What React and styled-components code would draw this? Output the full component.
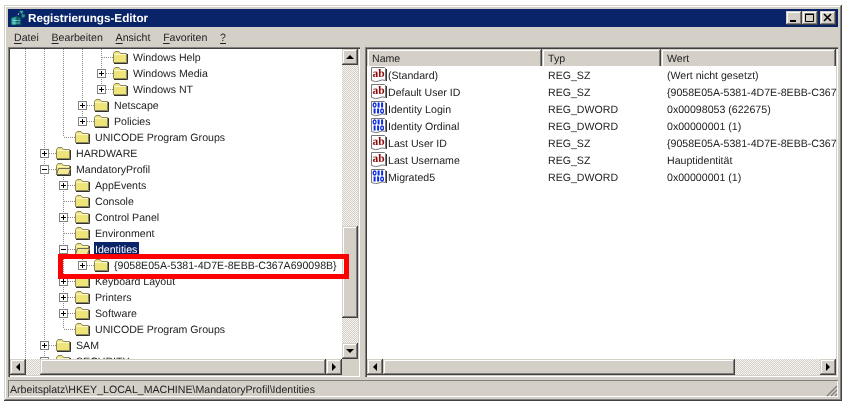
import React from 'react';
import styled, { createGlobalStyle, css } from 'styled-components';

const face = '#d4d0c8';

const GlobalStyle = createGlobalStyle`
  html, body {
    margin: 0;
    background: #fff;
  }
  body {
    padding: 5px 0 0 4px;
    font-family: "Liberation Sans", Tahoma, sans-serif;
    font-size: 10.6px;
    text-rendering: geometricPrecision;
    color: #222;
  }
`;

const raised = css`
  background-color: ${face};
  box-shadow: inset -1px -1px #404040, inset 1px 1px ${face}, inset -2px -2px #808080, inset 2px 2px #fff;
`;

const sunken = css`
  box-shadow: inset 1px 1px #808080, inset 2px 2px #404040, inset -1px -1px #fff, inset -2px -2px ${face};
`;

const hatch = css`
  background: repeating-conic-gradient(${face} 0 25%, #f4f3f0 0 50%) 0 0 / 2px 2px;
`;

const Window = styled.div`
  width: 838px;
  height: 396px;
  box-sizing: border-box;
  padding: 4px 4px 3px;
  background: ${face};
  box-shadow: inset -1px -1px #404040, inset 1px 1px ${face}, inset -2px -2px #808080, inset 2px 2px #fff;
  display: flex;
  flex-direction: column;
  filter: blur(0.3px);
`;

const TitleBar = styled.div`
  height: 18px;
  flex: none;
  background: #0a246a;
  display: flex;
  align-items: center;
  padding: 0 2px;
`;

const TitleText = styled.span`
  color: #fff;
  font-weight: 700;
  font-size: 11.7px;
  margin-left: 2px;
  flex: 1;
`;

const Controls = styled.div`
  display: flex;
`;

const ControlButton = styled.div`
  ${raised}
  width: 16px;
  height: 14px;
  display: flex;
  align-items: center;
  justify-content: center;
  margin-left: ${p => (p.$gap ? 2 : 0)}px;
`;

const MenuBar = styled.div`
  height: 20px;
  box-sizing: border-box;
  padding-top: 1px;
  flex: none;
  display: flex;
  align-items: center;
`;

const MenuItem = styled.span`
  padding: 0 6.4px;
  u {
    text-underline-offset: 2px;
  }
  &:first-child {
    padding-left: 6px;
  }
`;

const Panes = styled.div`
  flex: none;
  height: 330px;
  display: flex;
  gap: 5px;
`;

const TreePane = styled.div`
  ${sunken}
  position: relative;
  width: 352px;
  flex: none;
  box-sizing: border-box;
  padding: 2px;
  display: flex;
  flex-direction: column;
`;

const ListPane = styled.div`
  ${sunken}
  flex: 1;
  min-width: 0;
  box-sizing: border-box;
  padding: 2px;
  display: flex;
  flex-direction: column;
`;

const PaneBody = styled.div`
  flex: 1;
  min-height: 0;
  display: flex;
`;

const Tree = styled.div`
  flex: 1;
  min-width: 0;
  background: #fff;
  overflow: hidden;
  padding-left: 6px;
`;

const TreeRow = styled.div`
  height: 16px;
  display: flex;
  align-items: center;
  white-space: nowrap;
`;

const dots = css`
  content: '';
  position: absolute;
  background-size: 2px 2px;
`;

const Guide = styled.div`
  position: relative;
  width: 19px;
  height: 16px;
  flex: none;
  display: flex;
  align-items: center;
  justify-content: center;
  &::before {
    ${dots}
    left: 9px;
    top: 0;
    width: 1px;
    height: ${p => (p.$end ? 8 : 16)}px;
    background-image: linear-gradient(#8a8a8a 50%, transparent 50%);
  }
  &::after {
    ${dots}
    display: ${p => (p.$branch ? 'block' : 'none')};
    left: 10px;
    top: 8px;
    width: 11px;
    height: 1px;
    background-image: linear-gradient(90deg, #8a8a8a 50%, transparent 50%);
  }
`;

const Expander = styled.div`
  position: relative;
  z-index: 1;
  width: 9px;
  height: 9px;
  box-sizing: border-box;
  border: 1px solid #808080;
  background: #fff;
  display: flex;
  align-items: center;
  justify-content: center;
  margin-left: -1px;
`;

const Label = styled.span`
  margin-left: ${p => (p.$selected ? 4 : 5)}px;
  padding: 1px ${p => (p.$selected ? 2 : 0)}px 0 ${p => (p.$selected ? 1 : 0)}px;
  height: 14px;
  line-height: 15px;
  background: ${p => (p.$selected ? '#0a246a' : 'transparent')};
  color: ${p => (p.$selected ? '#fff' : '#222')};
`;

const FolderIcon = styled.svg`
  flex: none;
  margin-left: 2px;
  position: relative;
`;

const VScroll = styled.div`
  width: 16px;
  flex: none;
  display: flex;
  flex-direction: column;
`;

const HScroll = styled.div`
  height: 16px;
  flex: none;
  display: flex;
`;

const ArrowButton = styled.div`
  ${raised}
  width: 16px;
  height: 16px;
  flex: none;
  display: flex;
  align-items: center;
  justify-content: center;
`;

const Track = styled.div`
  ${hatch}
  flex: ${p => (p.$size ? `0 0 ${p.$size}px` : 1)};
`;

const Thumb = styled.div`
  ${raised}
  flex: ${p => (p.$size ? `0 0 ${p.$size}px` : 1)};
`;

const Corner = styled.div`
  width: 16px;
  flex: none;
  background: ${face};
`;

const HighlightBox = styled.div`
  position: absolute;
  left: 50px;
  top: 207px;
  width: 291px;
  height: 25px;
  box-sizing: border-box;
  border: 5px solid #f00;
  z-index: 2;
`;

const grid = css`
  display: grid;
  grid-template-columns: 175px 119px 1fr;
`;

const ListHeader = styled.div`
  ${grid}
  height: 17px;
  flex: none;
`;

const HeaderCell = styled.div`
  ${raised}
  padding-left: ${p => (p.$first ? 5 : 6)}px;
  line-height: 20px;
`;

const ListBody = styled.div`
  flex: 1;
  min-height: 0;
  background: #fff;
  overflow: hidden;
`;

const ListRow = styled.div`
  ${grid}
  height: 17px;
  align-items: center;
  white-space: nowrap;
`;

const NameCell = styled.div`
  display: flex;
  align-items: center;
  gap: 1px;
  padding-left: 4px;
`;

const NameText = styled.span`
  padding-top: 2px;
`;

const Cell = styled.div`
  padding: 2px 0 0 6px;
  overflow: hidden;
`;

const StatusBar = styled.div`
  flex: none;
  height: 17px;
  box-sizing: border-box;
  margin-top: 3px;
  position: relative;
  display: flex;
  align-items: center;
  padding: 2px 0 0 2px;
  box-shadow: inset 1px 1px #808080, inset -1px -1px #fff;
`;

const Grip = styled.svg`
  position: absolute;
  right: 0;
  bottom: 0;
`;

const Arrow = ({ dir }) => {
  const points = {
    up: '4,0 0,4 8,4',
    down: '0,0 8,0 4,4',
    left: '4,0 4,8 0,4',
    right: '0,0 4,4 0,8',
  }[dir];
  const vertical = dir === 'up' || dir === 'down';
  return (
    <svg width={vertical ? 8 : 4} height={vertical ? 4 : 8}>
      <polygon points={points} fill="#000" />
    </svg>
  );
};

const Folder = ({ open }) => (
  <FolderIcon width="15" height="14" viewBox="0 0 15 14">
    <path d="M0.5 3.5 L2 1.5 H6 L7.5 3.5 H13.5 V12.5 H0.5 Z" fill="#efe47a" stroke="#8a8660" />
    <rect x="1" y="4" width="12" height="1" fill="#fdf9cc" />
    <path d="M14.5 4 V13.5 H1" fill="none" stroke="#33322a" />
    {open && <path d="M2.5 6.5 H14.5 L12.5 12.5 H0.5 Z" fill="#f3ea98" stroke="#6e6b50" />}
  </FolderIcon>
);

const Sheet = ({ children }) => (
  <svg width="16" height="16" viewBox="0 0 16 16">
    <path d="M0.5 0.5 H13.5 L14.5 1.5 V13.5 Q11 12 8 14 Q5 15.5 0.5 13.5 Z" fill="#fff" stroke="#777" />
    <path d="M15.5 2 V14" stroke="#333" />
    {children}
  </svg>
);

const StringIcon = () => (
  <Sheet>
    <text x="7.6" y="10" textAnchor="middle" fontFamily='"Liberation Serif", serif' fontWeight="700" fontSize="11.5" fill="#8c0a0a">ab</text>
  </Sheet>
);

const Bit = ({ x, y, one }) =>
  one ? (
    <rect x={x + 0.6} y={y} width="2" height="5" fill="#0a2be0" />
  ) : (
    <ellipse cx={x + 1.6} cy={y + 2.5} rx="1.4" ry="2" fill="none" stroke="#0a2be0" strokeWidth="1.3" />
  );

const DwordIcon = () => (
  <Sheet>
    <Bit x={2} y={1.5} />
    <Bit x={6} y={1.5} one />
    <Bit x={9.5} y={1.5} one />
    <Bit x={2} y={7.5} one />
    <Bit x={5.5} y={7.5} one />
    <Bit x={9.5} y={7.5} />
  </Sheet>
);

const AppIcon = () => (
  <svg width="16" height="16" viewBox="0 0 16 16">
    <path d="M1 8 L7 6 V15 H1 Z" fill="#1b9c9c" stroke="#0b3d3d" strokeWidth="0.6" />
    <path d="M7 6 L11 8 V15 H7 Z" fill="#0e6a7a" stroke="#0b3d3d" strokeWidth="0.6" />
    <path d="M2 10.5 H10 M2 13 H10 M4 8 V15" stroke="#a9e6e0" strokeWidth="0.6" />
    <path d="M9 1 L12 0.5 L14 2 L11 3.5 Z" fill="#2fc4c4" stroke="#0b3d3d" strokeWidth="0.5" />
    <path d="M11 5 L15 4 L15 7 L12 8 Z" fill="#1b9c9c" stroke="#0b3d3d" strokeWidth="0.5" />
    <path d="M9 3 L8 5 M12 3.5 L12.5 4.5" stroke="#fff" strokeWidth="0.7" />
  </svg>
);

const w = ['v', 'v', 'v', 'v'];
const c = ['v', 'v'];

const treeRows = [
  { cols: [...w, 't'], name: 'Windows Help' },
  { cols: [...w, '+'], name: 'Windows Media' },
  { cols: [...w, '+l'], name: 'Windows NT' },
  { cols: ['v', 'v', 'v', '+'], name: 'Netscape' },
  { cols: ['v', 'v', 'v', '+l'], name: 'Policies' },
  { cols: [...c, 'l'], name: 'UNICODE Program Groups' },
  { cols: ['v', '+'], name: 'HARDWARE' },
  { cols: ['v', '-'], name: 'MandatoryProfil', open: true },
  { cols: [...c, '+'], name: 'AppEvents' },
  { cols: [...c, 't'], name: 'Console' },
  { cols: [...c, '+'], name: 'Control Panel' },
  { cols: [...c, 't'], name: 'Environment' },
  { cols: [...c, '-'], name: 'Identities', open: true, selected: true },
  { cols: ['v', 'v', 'v', '+l'], name: '{9058E05A-5381-4D7E-8EBB-C367A690098B}' },
  { cols: [...c, '+'], name: 'Keyboard Layout' },
  { cols: [...c, '+'], name: 'Printers' },
  { cols: [...c, '+'], name: 'Software' },
  { cols: [...c, 'l'], name: 'UNICODE Program Groups' },
  { cols: ['v', '+'], name: 'SAM' },
  { cols: ['v', '+'], name: 'SECURITY' },
];

const guid = '{9058E05A-5381-4D7E-8EBB-C367A690098B}';

const values = [
  { name: '(Standard)', type: 'REG_SZ', value: '(Wert nicht gesetzt)' },
  { name: 'Default User ID', type: 'REG_SZ', value: guid },
  { name: 'Identity Login', type: 'REG_DWORD', value: '0x00098053 (622675)' },
  { name: 'Identity Ordinal', type: 'REG_DWORD', value: '0x00000001 (1)' },
  { name: 'Last User ID', type: 'REG_SZ', value: guid },
  { name: 'Last Username', type: 'REG_SZ', value: 'Hauptidentität' },
  { name: 'Migrated5', type: 'REG_DWORD', value: '0x00000001 (1)' },
];

const TreeGuide = ({ kind }) => {
  const hasBox = kind[0] === '+' || kind[0] === '-';
  return (
    <Guide $branch={kind !== 'v'} $end={kind === 'l' || kind === '+l'}>
      {hasBox && (
        <Expander>
          <svg width="7" height="7">
            <rect x="1" y="3" width="5" height="1" fill="#000" />
            {kind[0] === '+' && <rect x="3" y="1" width="1" height="5" fill="#000" />}
          </svg>
        </Expander>
      )}
    </Guide>
  );
};

const App = () => (
  <>
    <GlobalStyle />
    <Window>
      <TitleBar>
        <AppIcon />
        <TitleText>Registrierungs-Editor</TitleText>
        <Controls>
          <ControlButton>
            <svg width="10" height="10"><rect x="1" y="7" width="6" height="2" fill="#000" /></svg>
          </ControlButton>
          <ControlButton>
            <svg width="10" height="10"><path d="M0.5 1.5 H8.5 V8.5 H0.5 Z M0 1 H9" fill="none" stroke="#000" /></svg>
          </ControlButton>
          <ControlButton $gap>
            <svg width="10" height="10"><path d="M1 1 L8 8 M8 1 L1 8" stroke="#000" strokeWidth="1.6" /></svg>
          </ControlButton>
        </Controls>
      </TitleBar>
      <MenuBar>
        <MenuItem><u>D</u>atei</MenuItem>
        <MenuItem><u>B</u>earbeiten</MenuItem>
        <MenuItem><u>A</u>nsicht</MenuItem>
        <MenuItem><u>F</u>avoriten</MenuItem>
        <MenuItem><u>?</u></MenuItem>
      </MenuBar>
      <Panes>
        <TreePane>
          <PaneBody>
            <Tree>
              {treeRows.map((row, i) => (
                <TreeRow key={i}>
                  {row.cols.map((kind, j) => <TreeGuide key={j} kind={kind} />)}
                  <Folder open={row.open} />
                  <Label $selected={row.selected}>{row.name}</Label>
                </TreeRow>
              ))}
            </Tree>
            <VScroll>
              <ArrowButton><Arrow dir="up" /></ArrowButton>
              <Track $size={161} />
              <Thumb $size={92} />
              <Track />
              <ArrowButton><Arrow dir="down" /></ArrowButton>
            </VScroll>
          </PaneBody>
          <HScroll>
            <ArrowButton><Arrow dir="left" /></ArrowButton>
            <Track $size={14} />
            <Thumb />
            <ArrowButton><Arrow dir="right" /></ArrowButton>
            <Corner />
          </HScroll>
          <HighlightBox />
        </TreePane>
        <ListPane>
          <ListHeader>
            <HeaderCell $first>Name</HeaderCell>
            <HeaderCell>Typ</HeaderCell>
            <HeaderCell>Wert</HeaderCell>
          </ListHeader>
          <ListBody>
            {values.map(row => (
              <ListRow key={row.name}>
                <NameCell>
                  {row.type === 'REG_SZ' ? <StringIcon /> : <DwordIcon />}
                  <NameText>{row.name}</NameText>
                </NameCell>
                <Cell>{row.type}</Cell>
                <Cell>{row.value}</Cell>
              </ListRow>
            ))}
          </ListBody>
          <HScroll>
            <ArrowButton><Arrow dir="left" /></ArrowButton>
            <Thumb $size={352} />
            <Track />
            <ArrowButton><Arrow dir="right" /></ArrowButton>
          </HScroll>
        </ListPane>
      </Panes>
      <StatusBar>
        Arbeitsplatz\HKEY_LOCAL_MACHINE\MandatoryProfil\Identities
        <Grip width="12" height="12" viewBox="0 0 12 12">
          <path d="M11 1 L1 11 M11 5 L5 11 M11 9 L9 11" stroke="#808080" strokeWidth="1.4" />
        </Grip>
      </StatusBar>
    </Window>
  </>
);

export default App;
